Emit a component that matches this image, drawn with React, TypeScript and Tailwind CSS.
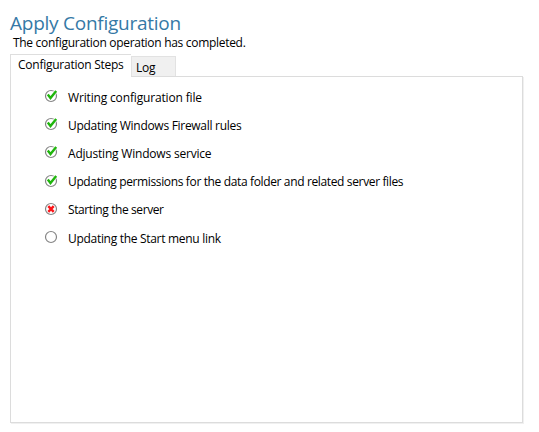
type Status = 'done' | 'failed' | 'pending';

const steps: { label: string; status: Status; tracking: string }[] = [
  { label: 'Writing configuration file', status: 'done', tracking: 'tracking-[-0.16px]' },
  { label: 'Updating Windows Firewall rules', status: 'done', tracking: 'tracking-[-0.29px]' },
  { label: 'Adjusting Windows service', status: 'done', tracking: 'tracking-[-0.2px]' },
  { label: 'Updating permissions for the data folder and related server files', status: 'done', tracking: 'tracking-[-0.36px]' },
  { label: 'Starting the server', status: 'failed', tracking: 'tracking-[-0.4px]' },
  { label: 'Updating the Start menu link', status: 'pending', tracking: 'tracking-[-0.3px]' },
];

function StatusIcon({ status }: { status: Status }) {
  return (
    <svg className="h-[14px] w-[14px] shrink-0" viewBox="0 0 14 14" fill="none">
      <circle cx="7" cy="7" r="5.5" fill="#fff" stroke="#858585" strokeWidth="1.2" />
      {status === 'done' && (
        <>
          <path d="M4 5.8 6.4 8.8 12 2.2" stroke="#fff" strokeWidth="3.6" />
          <path d="M3.8 5.5 6.5 9 12.2 2" stroke="#1fb50c" strokeWidth="2.4" />
        </>
      )}
      {status === 'failed' && <path d="m4.3 4.1 5.4 5.8m0-5.8-5.4 5.8" stroke="#fa1519" strokeWidth="2.4" />}
    </svg>
  );
}

export default function App() {
  return (
    <main className="h-[432px] w-[539px] overflow-hidden bg-white pl-[10px] pt-[10px] font-['Open_Sans',sans-serif] text-[12px] text-black">
      <h1 className="h-[24px] whitespace-nowrap text-[19px] leading-[26px] tracking-[-0.25px] text-[#3579a6]">
        <span>Apply Configuration</span>
      </h1>
      <p className="h-[20px] whitespace-nowrap pl-[3px] leading-[17px] tracking-[-0.3px]"><span>The configuration operation has completed.</span></p>
      <div className="flex h-[22px] items-end">
        <div className="z-10 -mb-px h-[23px] w-[121px] whitespace-nowrap border-l border-t border-[#dedede] bg-white pl-[7px] leading-[20px] tracking-[-0.25px]">
          <span>Configuration Steps</span>
        </div>
        <div className="h-[20px] w-[45px] border-x border-t border-[#e2e2e2] bg-[#f0f0f0] pl-[4px] leading-[21px] tracking-[-0.2px]">
          <span>Log</span>
        </div>
      </div>
      <section className="h-[347px] w-[513px] border border-[#dcdcdc] bg-white pl-[33px] pt-[5px] shadow-[1px_1px_0_#f0f0f0]">
        {steps.map((step) => (
          <div key={step.label} className="flex h-[28.2px] items-center gap-[10px]">
            <StatusIcon status={step.status} />
            <span className={`whitespace-nowrap pt-[3px] ${step.tracking}`}>{step.label}</span>
          </div>
        ))}
      </section>
    </main>
  );
}
